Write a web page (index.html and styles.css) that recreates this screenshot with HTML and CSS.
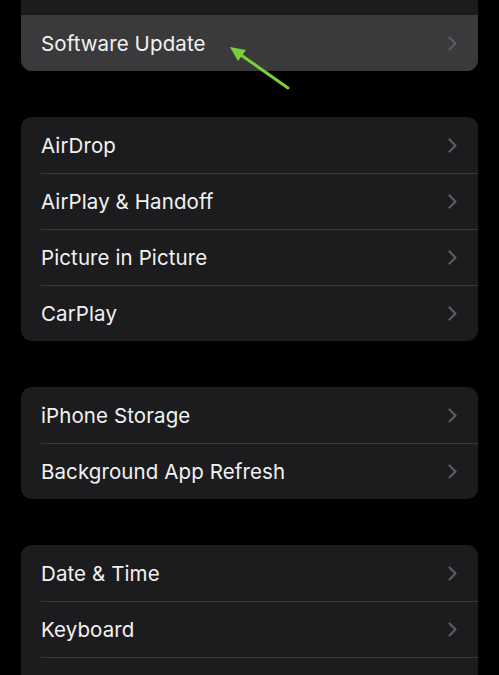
FILE: index.html
```html
<!DOCTYPE html>
<html lang="en">
<head>
    <meta charset="UTF-8">
    <meta name="viewport" content="width=device-width, initial-scale=1.0">
    <title>General</title>
    <link rel="stylesheet" href="styles.css">
</head>
<body>
    <div class="settings">
        <!-- top group scrolled mostly out of view -->
        <div class="card card-top">
            <div class="row"><div class="row-inner"></div></div>
            <div class="row row-active"><div class="row-inner"><span class="label">Software Update</span><svg class="chevron" width="9" height="15" viewBox="0 0 9 15"><path d="M1.5 1.5 L7.5 7.5 L1.5 13.5" fill="none" stroke="#5c5c60" stroke-width="2.2" stroke-linecap="round" stroke-linejoin="round"/></svg></div></div>
        </div>

        <div class="card">
            <div class="row"><div class="row-inner"><span class="label">AirDrop</span><svg class="chevron" width="9" height="15" viewBox="0 0 9 15"><path d="M1.5 1.5 L7.5 7.5 L1.5 13.5" fill="none" stroke="#5c5c60" stroke-width="2.2" stroke-linecap="round" stroke-linejoin="round"/></svg></div></div>
            <div class="row"><div class="row-inner"><span class="label">AirPlay &amp; Handoff</span><svg class="chevron" width="9" height="15" viewBox="0 0 9 15"><path d="M1.5 1.5 L7.5 7.5 L1.5 13.5" fill="none" stroke="#5c5c60" stroke-width="2.2" stroke-linecap="round" stroke-linejoin="round"/></svg></div></div>
            <div class="row"><div class="row-inner"><span class="label">Picture in Picture</span><svg class="chevron" width="9" height="15" viewBox="0 0 9 15"><path d="M1.5 1.5 L7.5 7.5 L1.5 13.5" fill="none" stroke="#5c5c60" stroke-width="2.2" stroke-linecap="round" stroke-linejoin="round"/></svg></div></div>
            <div class="row"><div class="row-inner"><span class="label">CarPlay</span><svg class="chevron" width="9" height="15" viewBox="0 0 9 15"><path d="M1.5 1.5 L7.5 7.5 L1.5 13.5" fill="none" stroke="#5c5c60" stroke-width="2.2" stroke-linecap="round" stroke-linejoin="round"/></svg></div></div>
        </div>

        <div class="card">
            <div class="row"><div class="row-inner"><span class="label">iPhone Storage</span><svg class="chevron" width="9" height="15" viewBox="0 0 9 15"><path d="M1.5 1.5 L7.5 7.5 L1.5 13.5" fill="none" stroke="#5c5c60" stroke-width="2.2" stroke-linecap="round" stroke-linejoin="round"/></svg></div></div>
            <div class="row"><div class="row-inner"><span class="label">Background App Refresh</span><svg class="chevron" width="9" height="15" viewBox="0 0 9 15"><path d="M1.5 1.5 L7.5 7.5 L1.5 13.5" fill="none" stroke="#5c5c60" stroke-width="2.2" stroke-linecap="round" stroke-linejoin="round"/></svg></div></div>
        </div>

        <div class="card card-last">
            <div class="row"><div class="row-inner"><span class="label">Date &amp; Time</span><svg class="chevron" width="9" height="15" viewBox="0 0 9 15"><path d="M1.5 1.5 L7.5 7.5 L1.5 13.5" fill="none" stroke="#5c5c60" stroke-width="2.2" stroke-linecap="round" stroke-linejoin="round"/></svg></div></div>
            <div class="row"><div class="row-inner"><span class="label">Keyboard</span><svg class="chevron" width="9" height="15" viewBox="0 0 9 15"><path d="M1.5 1.5 L7.5 7.5 L1.5 13.5" fill="none" stroke="#5c5c60" stroke-width="2.2" stroke-linecap="round" stroke-linejoin="round"/></svg></div></div>
            <div class="row"><div class="row-inner"></div></div>
        </div>
    </div>

    <!-- annotation arrow pointing at Software Update -->
    <svg class="pointer" width="70" height="56" viewBox="0 0 70 56">
        <line x1="63" y1="48" x2="16" y2="15" stroke="#7bd03a" stroke-width="3" stroke-linecap="round"/>
        <polygon points="5,7 21,10 13,21" fill="#7bd03a"/>
    </svg>
</body>
</html>
```

FILE: styles.css
```css
body {
    margin: 0;
    height: 675px;
    background-color: #000;
    font-family: Inter, "Noto Sans", sans-serif;
    color: #f2f2f2;
    overflow: hidden;
}
.settings {
    padding: 0 21px;
}
.card {
    background-color: #1c1c1e;
    border-radius: 11px;
    overflow: hidden;
    margin-bottom: 46px;
}
.card-top {
    margin-top: -41px;
}
.card-last {
    margin-bottom: 0;
}
.row {
    padding-left: 20px;
}
.row-active {
    background-color: #3a3a3c;
}
.row-inner {
    height: 56px;
    box-sizing: border-box;
    display: flex;
    align-items: center;
    justify-content: space-between;
    padding-right: 21px;
    border-top: 1px solid #38383a;
}
.row:first-child .row-inner,
.row-active .row-inner {
    border-top: none;
}
.label {
    font-size: 20.5px;
    letter-spacing: 0.1px;
}
.chevron {
    display: block;
}
.pointer {
    position: absolute;
    left: 225px;
    top: 40px;
}
```
